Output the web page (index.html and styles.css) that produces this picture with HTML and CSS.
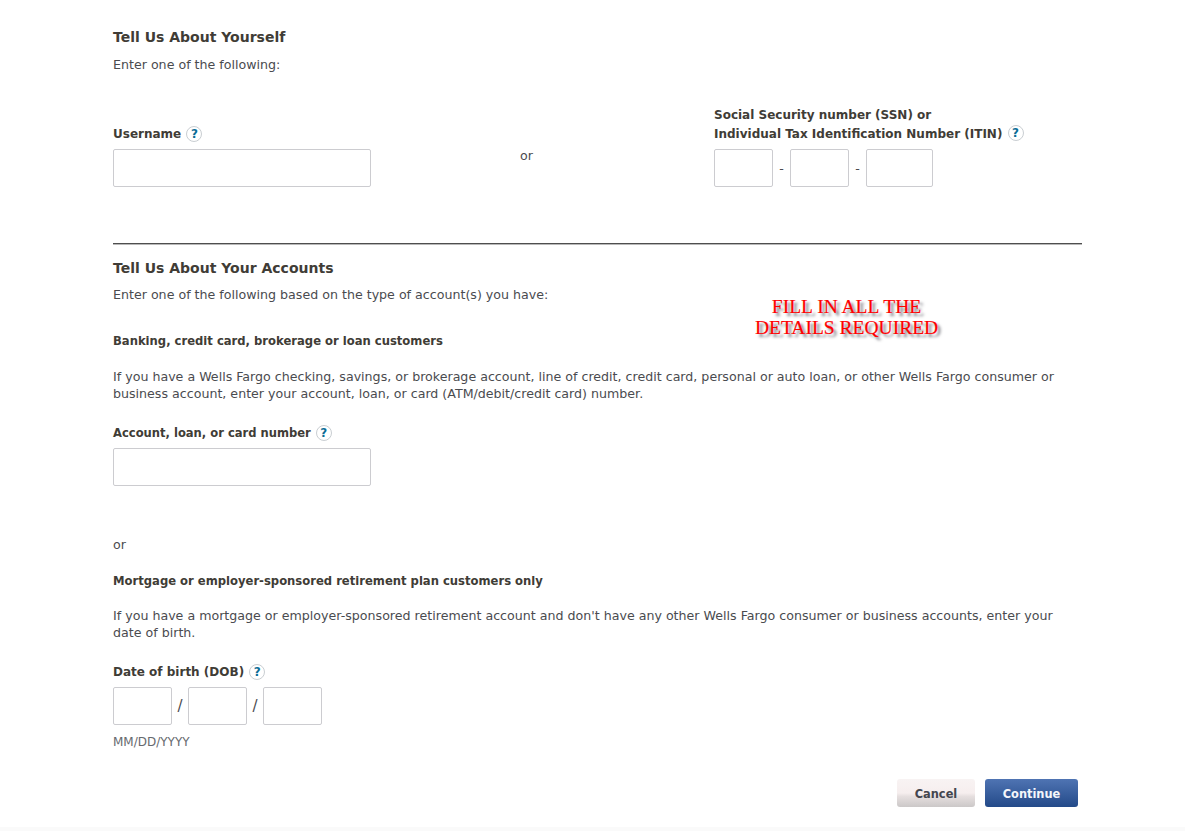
FILE: index.html
```html
<!doctype html>
<html>
<head>
<meta charset="utf-8">
<title>Tell Us About Yourself</title>
<link rel="stylesheet" href="styles.css">
</head>
<body>
<div class="page">
	<h2 class="title">Tell Us About Yourself</h2>
	<p class="intro">Enter one of the following:</p>

	<div class="idRow">
		<div class="idCol">
			<label class="fieldLabel">Username <span class="help">?</span></label>
			<input type="text" class="box boxWide">
		</div>
		<div class="orCol">or</div>
		<div class="idCol ssnCol">
			<label class="fieldLabel">Social Security number (SSN) or<br>Individual Tax Identification Number (ITIN) <span class="help">?</span></label>
			<div class="boxRow">
				<input type="text" class="box boxSsn">
				<span class="sep">-</span>
				<input type="text" class="box boxSsn">
				<span class="sep">-</span>
				<input type="text" class="box boxSsnLast">
			</div>
		</div>
	</div>

	<hr class="rule">

	<h2 class="title">Tell Us About Your Accounts</h2>
	<div class="accountsHead">
		<p class="intro introAccounts">Enter one of the following based on the type of account(s) you have:</p>
		<div class="notice">FILL IN ALL THE<br>DETAILS REQUIRED</div>
	</div>

	<h3 class="subTitle">Banking, credit card, brokerage or loan customers</h3>
	<p class="desc">If you have a Wells Fargo checking, savings, or brokerage account, line of credit, credit card, personal or auto loan, or other Wells Fargo consumer or business account, enter your account, loan, or card (ATM/debit/credit card) number.</p>
	<label class="fieldLabel accountLabel">Account, loan, or card number <span class="help">?</span></label>
	<input type="text" class="box boxWide">

	<p class="orLine">or</p>

	<h3 class="subTitle">Mortgage or employer-sponsored retirement plan customers only</h3>
	<p class="desc descDob">If you have a mortgage or employer-sponsored retirement account and don't have any other Wells Fargo consumer or business accounts, enter your date of birth.</p>
	<label class="fieldLabel dobLabel">Date of birth (DOB) <span class="help">?</span></label>
	<div class="boxRow">
		<input type="text" class="box boxDate">
		<span class="sep sepDate">/</span>
		<input type="text" class="box boxDate">
		<span class="sep sepDate">/</span>
		<input type="text" class="box boxDate">
	</div>
	<p class="hint">MM/DD/YYYY</p>

	<div class="buttons">
		<button type="button" class="btn btnCancel">Cancel</button>
		<button type="button" class="btn btnContinue">Continue</button>
	</div>
</div>
<div class="footerStrip"></div>
</body>
</html>
```

FILE: styles.css
```css
html, body {
	margin: 0;
	padding: 0;
	background-color: white;
}
body {
	font-family: "DejaVu Sans", Verdana, sans-serif;
	font-size: 12.63px;
	line-height: 17px;
	color: #4a4b4f;
	height: 831px;
	overflow: hidden;
	position: relative;
}
p, h2, h3 {
	margin: 0;
}
.page {
	width: 969px;
	margin-left: 113px;
	padding-top: 28px;
}
.title {
	font-size: 14px;
	font-weight: bold;
	line-height: 18px;
	color: #403c36;
}
.intro {
	margin-top: 10px;
}
.introAccounts {
	margin-top: 9px;
}
.idRow {
	display: flex;
	margin-top: 21px;
	height: 130px;
}
.idCol {
	flex: none;
	width: 407px;
}
.idCol .fieldLabel {
	height: 55px;
	padding-top: 32px;
	box-sizing: border-box;
}
.ssnCol {
	width: 368px;
}
.ssnCol .fieldLabel {
	line-height: 19px;
	padding-top: 12px;
}
.orCol {
	flex: none;
	width: 194px;
	padding-top: 53px;
}
.fieldLabel {
	display: block;
	font-size: 12px;
	font-weight: bold;
	color: #403c36;
}
.help {
	display: inline-block;
	width: 14px;
	height: 14px;
	margin-left: 1px;
	border: 1px solid #c9ced2;
	border-radius: 50%;
	font-size: 12px;
	line-height: 14px;
	text-align: center;
	font-weight: bold;
	color: #0b6d96;
	vertical-align: top;
}
.box {
	display: block;
	height: 38px;
	padding: 0;
	box-sizing: border-box;
	border: 1px solid #ccccd0;
	border-radius: 2px;
	background: white;
}
.boxWide {
	width: 258px;
}
.boxRow {
	display: flex;
	align-items: center;
}
.boxSsn {
	width: 59px;
}
.boxSsnLast {
	width: 67px;
}
.sep {
	width: 17px;
	text-align: center;
}
.boxDate {
	width: 59px;
}
.sepDate {
	font-size: 15px;
	width: 16px;
}
.rule {
	margin: 0;
	margin-top: 19px;
	border: 0;
	border-top: 1px solid #4e4e4e;
	border-bottom: 1px solid #b8b8b8;
	height: 0;
}
.rule + .title {
	margin-top: 14px;
}
.accountsHead {
	position: relative;
}
.notice {
	position: absolute;
	left: 642px;
	top: 10px;
	font-family: "Liberation Serif", serif;
	font-size: 19.5px;
	line-height: 21px;
	width: 183px;
	white-space: nowrap;
	text-align: center;
	color: red;
	-webkit-text-stroke: 0.2px red;
	text-shadow: 3px 3px 3px #77777f;
}
.subTitle {
	font-size: 11.6px;
	line-height: 17px;
	font-weight: bold;
	color: #403c36;
	margin-top: 30px;
}
.desc {
	margin-top: 18px;
}
.descDob {
	margin-top: 17px;
}
.accountLabel {
	font-size: 11.55px;
	margin-top: 23px;
	margin-bottom: 6px;
}
.orLine {
	margin-top: 50px;
}
.orLine + .subTitle {
	margin-top: 20px;
}
.dobLabel {
	margin-top: 23px;
	margin-bottom: 6px;
}
.hint {
	font-size: 12px;
	margin-top: 9px;
	color: #66696e;
}
.buttons {
	display: flex;
	justify-content: flex-end;
	gap: 10px;
	margin-top: 28px;
	padding-right: 4px;
}
.btn {
	height: 28px;
	padding: 1px 0 0;
	border: 0;
	border-radius: 3px;
	font-family: "DejaVu Sans", Verdana, sans-serif;
	font-size: 11.4px;
	font-weight: bold;
}
.btnCancel {
	width: 78px;
	color: #44464f;
	background: linear-gradient(#f8f3f3 0%, #f6eeee 50%, #e6dfdf 62%, #cbc8c8 100%);
}
.btnContinue {
	width: 93px;
	color: #f4f6fb;
	background: linear-gradient(#4f74b3, #234a89);
}
.footerStrip {
	position: absolute;
	left: 0;
	right: 0;
	bottom: 0;
	height: 4px;
	background-color: #fafafa;
}
```
